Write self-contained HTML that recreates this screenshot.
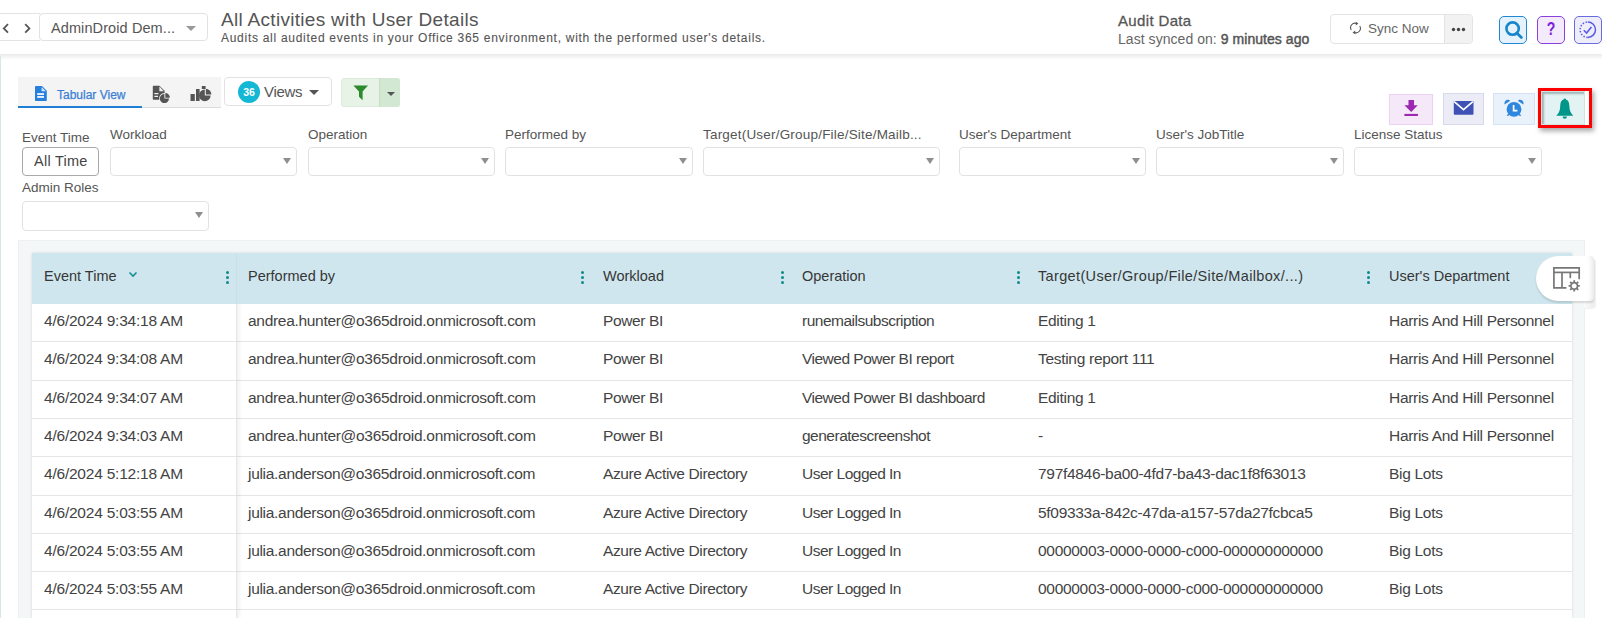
<!DOCTYPE html>
<html><head><meta charset="utf-8">
<style>
*{box-sizing:border-box;margin:0;padding:0}
html,body{width:1602px;height:618px;overflow:hidden;background:#fff;font-family:"Liberation Sans",sans-serif;color:#333}
.a{position:absolute}
.hdrshadow{left:0;top:54px;width:1602px;height:6px;background:linear-gradient(#ebebeb,#fff)}
.lstrip{left:0;top:56px;width:1.3px;height:562px;background:#dbe4ea}
.nav{left:-12px;top:13px;width:52px;height:28px;border:1px solid #e3e3e3;border-right:none}
.dd{border:1px solid #e2e2e2;border-radius:4px;background:#fff}
.tri{width:0;height:0;border-left:4px solid transparent;border-right:4px solid transparent;border-top:6px solid #8f8f8f}
.lbl{font-size:13.5px;color:#555}
.th{font-size:14.5px;color:#363636;top:267.5px}
.kb{width:3px;top:271px}
.kb i{display:block;width:3px;height:3px;border-radius:50%;background:#0f8a8a;margin-bottom:2px}
.row{left:32px;width:1540px;background:#fff;border-bottom:1px solid #e6e6e6}
.td{font-size:15.5px;color:#434343;top:8px;letter-spacing:-0.3px}
</style></head>
<body>
<!-- header -->
<div class="a hdrshadow"></div>
<div class="a lstrip"></div>
<div class="a nav"></div>
<svg class="a" style="left:0;top:20px" width="40" height="16" viewBox="0 0 40 16">
<path d="M8 4.2 L3.8 8.4 L8 12.6" fill="none" stroke="#555" stroke-width="1.8"/>
<path d="M25.2 4.2 L29.4 8.4 L25.2 12.6" fill="none" stroke="#555" stroke-width="1.8"/>
</svg>
<div class="a dd" style="left:39px;top:13px;width:169px;height:28px"></div>
<div class="a" style="left:51px;top:20px;font-size:14.5px;color:#555;letter-spacing:0.1px">AdminDroid Dem...</div>
<div class="a tri" style="left:186px;top:26px;border-left-width:5px;border-right-width:5px;border-top-width:5px;border-top-color:#999"></div>

<div class="a" style="left:221px;top:9px;font-size:19px;color:#555;letter-spacing:0.3px">All Activities with User Details</div>
<div class="a" style="left:221px;top:31px;font-size:12px;color:#555;letter-spacing:0.715px;-webkit-text-stroke:0.1px #555">Audits all audited events in your Office 365 environment, with the performed user's details.</div>

<div class="a" style="left:1118px;top:12px;font-size:15px;color:#555;letter-spacing:0.35px;-webkit-text-stroke:0.3px #555">Audit Data</div>
<div class="a" style="left:1118px;top:30.5px;font-size:14px;color:#666;letter-spacing:0.05px">Last synced on: <span style="color:#555;-webkit-text-stroke:0.45px #555">9 minutes ago</span></div>

<div class="a dd" style="left:1330px;top:14px;width:143px;height:30px;border-color:#e4e4e4"></div>
<div class="a" style="left:1444px;top:15px;width:28px;height:28px;background:#f2f2f2;border-left:1px solid #e4e4e4;border-radius:0 4px 4px 0"></div>
<div class="a" style="left:1368px;top:20.5px;font-size:13.5px;color:#666;letter-spacing:0px">Sync Now</div>
<svg class="a" style="left:1349px;top:21px" width="13" height="14" viewBox="0 0 13 14"><path d="M2.3 9 A4.4 4.4 0 0 1 7.8 2.6" fill="none" stroke="#555" stroke-width="1.1"/><path d="M10.7 5 A4.4 4.4 0 0 1 5.2 11.4" fill="none" stroke="#555" stroke-width="1.1"/><path d="M6.8 0.8 L9.4 2.6 L6.8 4.4Z" fill="#555"/><path d="M6.2 9.6 L3.6 11.4 L6.2 13.2Z" fill="#555"/></svg>
<svg class="a" style="left:1451px;top:27px" width="15" height="5" viewBox="0 0 15 5"><circle cx="2.5" cy="2.5" r="1.7" fill="#444"/><circle cx="7.5" cy="2.5" r="1.7" fill="#444"/><circle cx="12.5" cy="2.5" r="1.7" fill="#444"/></svg>

<div class="a" style="left:1499px;top:16px;width:28px;height:27.5px;border:1.5px solid #1e88d2;border-radius:5px;background:#e6f2fb"></div>
<div class="a" style="left:1537px;top:16px;width:28px;height:27.5px;border:1.5px solid #8a3fdc;border-radius:5px;background:#f3ebfb"></div>
<div class="a" style="left:1574px;top:16px;width:28px;height:27.5px;border:1.5px solid #6b6be0;border-radius:5px;background:#eeeefb"></div>
<svg class="a" style="left:1499px;top:16px" width="28" height="28" viewBox="0 0 28 28"><circle cx="13.6" cy="12.6" r="6.2" fill="none" stroke="#1586cc" stroke-width="2.6"/><path d="M17.8 17 L22.4 21.4" stroke="#1586cc" stroke-width="2.8" stroke-linecap="round"/></svg>
<div class="a" style="left:1537px;top:17px;width:28px;text-align:center;font-size:17.5px;font-weight:bold;color:#7b22d8;line-height:24px;transform:scaleX(0.8)">?</div>
<svg class="a" style="left:1574px;top:16px" width="28" height="28" viewBox="0 0 28 28"><path d="M13.8 6 A7.7 7.7 0 1 1 13.8 21.4" fill="none" stroke="#5b5be6" stroke-width="1.5"/><path d="M13.8 21.4 A7.7 7.7 0 0 1 13.8 6" fill="none" stroke="#5b5be6" stroke-width="1.5" stroke-dasharray="1.5 1.6"/><path d="M9.8 14.2 L12.6 17 L17.4 11" fill="none" stroke="#5b5be6" stroke-width="1.6"/></svg>

<!-- toolbar -->
<div class="a" style="left:18px;top:77px;width:203px;height:31px;background:#f4f4f4;border-bottom:1.5px solid #dcdcdc"></div>
<div class="a" style="left:18px;top:106px;width:124px;height:2px;background:#1f7fd8"></div>
<div class="a" style="left:57px;top:88px;font-size:12px;color:#3a7fd5;letter-spacing:0px;-webkit-text-stroke:0.25px #3a7fd5">Tabular View</div>
<svg class="a" style="left:35px;top:86px" width="12" height="15" viewBox="0 0 12 15"><path d="M0.8 0 H7 L11.8 4.8 V14.2 Q11.8 15 11 15 H0.8 Q0 15 0 14.2 V0.8 Q0 0 0.8 0Z" fill="#2680db"/><path d="M6.6 1 V5.2 H10.8Z" fill="#d6e8f8"/><rect x="2.2" y="7.2" width="6.8" height="1.7" fill="#fff"/><rect x="2.2" y="10.1" width="6.8" height="1.7" fill="#fff"/></svg>
<svg class="a" style="left:152px;top:85px" width="20" height="18" viewBox="0 0 20 18"><path d="M1.6 0.7 H7.4 L12.6 5.8 V8 A5.6 5.6 0 0 0 7.2 14.8 H1.6 Q0.8 14.8 0.8 14 V1.5 Q0.8 0.7 1.6 0.7Z" fill="#555"/><path d="M7.4 1.6 V6.2 H11.8Z" fill="#f4f4f4"/><rect x="2.4" y="8" width="4" height="1.2" fill="#f4f4f4"/><rect x="2.4" y="10.8" width="3.6" height="1.2" fill="#f4f4f4"/><path d="M12.4 9 A4.6 4.6 0 1 0 17 13.6 H12.4Z" fill="#555"/><path d="M13.3 8.1 A4.6 4.6 0 0 1 17.9 12.7 H13.3Z" fill="#555"/></svg>
<svg class="a" style="left:189px;top:85px" width="24" height="17" viewBox="0 0 24 17"><rect x="1.5" y="9" width="4.3" height="7" fill="#555"/><rect x="7" y="4" width="3.6" height="12" fill="#555"/><rect x="12.8" y="1" width="3.8" height="3" fill="#555"/><path d="M15.8 4.6 A5.8 5.8 0 1 0 21.6 10.4 H15.8Z" fill="#555"/><path d="M16.8 3.8 A5.8 5.8 0 0 1 22.4 9.4 H16.8Z" fill="#555"/></svg>

<div class="a dd" style="left:224px;top:77px;width:108px;height:29px;border-color:#e2e2e2"></div>
<div class="a" style="left:238px;top:81px;width:22px;height:22px;border-radius:50%;background:#14b8d4;color:#fff;font-size:10.5px;font-weight:bold;text-align:center;line-height:23px;letter-spacing:-0.2px">36</div>
<div class="a" style="left:264px;top:83px;font-size:15px;color:#555;letter-spacing:-0.3px">Views</div>
<div class="a tri" style="left:309px;top:90px;border-left-width:5px;border-right-width:5px;border-top-width:5px;border-top-color:#555"></div>

<div class="a" style="left:341px;top:78px;width:59px;height:29px;background:#e8f3e8;border:1px solid #dcebdc;border-radius:3px"></div>
<div class="a" style="left:379px;top:78px;width:21px;height:29px;background:#d3e8d3;border-radius:0 3px 3px 0;border-left:1px solid #c5dcc5"></div>
<svg class="a" style="left:353px;top:85px" width="16" height="16" viewBox="0 0 16 16"><path d="M0.4 0.4 H15 L9.6 6.6 V15.2 L6 11.8 V6.6Z" fill="#2b8a2b"/></svg>
<div class="a tri" style="left:387px;top:92px;border-left-width:4px;border-right-width:4px;border-top-width:4px;border-top-color:#555"></div>

<!-- action buttons -->
<div class="a" style="left:1389px;top:94px;width:44px;height:31px;background:#f5e8f8;border:1px solid #ecd2f1"></div>
<svg class="a" style="left:1404px;top:99px" width="15" height="18" viewBox="0 0 15 18"><path d="M4.5 1 H10 V6.2 H13.7 L7.25 12.9 L0.4 6.2 H4.5Z" fill="#9c27b0"/><rect x="0.4" y="14.9" width="13.5" height="2.1" fill="#9c27b0"/></svg>
<div class="a" style="left:1443px;top:93px;width:41px;height:32px;background:#ececf6;border:1px solid #d9d9ee"></div>
<svg class="a" style="left:1453px;top:100px" width="22" height="16" viewBox="0 0 22 16"><rect x="0.8" y="1" width="19.7" height="13.7" rx="0.8" fill="#3f51b5"/><path d="M1.2 1.6 L10.5 9.6 L19.9 1.6" fill="none" stroke="#fff" stroke-width="1.6"/></svg>
<div class="a" style="left:1493px;top:93px;width:42px;height:32px;background:#e9f1fb;border:1px solid #d3e2f5"></div>
<svg class="a" style="left:1504px;top:99px" width="20" height="19" viewBox="0 0 20 19"><circle cx="10" cy="10.3" r="7.4" fill="#2e86de"/><path d="M0.6 5.4 C-0.2 2.2 2.6 0 5.6 1.2 L6 2Z" fill="#2e86de"/><path d="M19.4 5.4 C20.2 2.2 17.4 0 14.4 1.2 L14 2Z" fill="#2e86de"/><path d="M3.4 16.8 L5.2 15" stroke="#2e86de" stroke-width="1.6"/><path d="M16.6 16.8 L14.8 15" stroke="#2e86de" stroke-width="1.6"/><path d="M9.6 6 V11.6 H13.4" fill="none" stroke="#fff" stroke-width="1.7"/></svg>
<div class="a" style="left:1538px;top:88px;width:54px;height:40px;box-shadow:2px 3px 5px rgba(0,0,0,0.35)"></div>
<div class="a" style="left:1541px;top:91px;width:48px;height:34px;background:#fff"></div>
<div class="a" style="left:1541px;top:91px;width:44px;height:34px;background:#e3f2f2;border:1px solid #cfe3e1;box-shadow:inset 2px 2px 2px rgba(80,110,110,0.45)"></div>
<div class="a" style="left:1538px;top:88px;width:54px;height:40px;border:3px solid #f00"></div>
<svg class="a" style="left:1555px;top:98px" width="20" height="22" viewBox="0 0 20 22"><circle cx="9.8" cy="1.6" r="1.2" fill="#00968a"/><path d="M9.8 1.4 C6 1.4 5.4 4.6 5.2 8.4 C5 12 4.4 14.6 1.3 17.8 H18.3 C15.2 14.6 14.6 12 14.4 8.4 C14.2 4.6 13.6 1.4 9.8 1.4Z" fill="#00968a"/><path d="M7.6 18.6 A2.2 2.2 0 0 0 12 18.6Z" fill="#00968a"/></svg>

<!-- filters -->
<div id="filters"><div class="a lbl" style="left:22px;top:130px">Event Time</div><div class="a" style="left:22px;top:147px;width:77px;height:29px;border:1px solid #a9a9a9;border-radius:4px"></div><div class="a" style="left:34px;top:153px;font-size:14.5px;color:#444;letter-spacing:0.25px">All Time</div><div class="a dd" style="left:110px;top:147px;width:187px;height:29px"></div><div class="a tri" style="left:283px;top:158px"></div><div class="a lbl" style="left:110px;top:126.5px;">Workload</div><div class="a dd" style="left:308px;top:147px;width:187px;height:29px"></div><div class="a tri" style="left:481px;top:158px"></div><div class="a lbl" style="left:308px;top:126.5px;">Operation</div><div class="a dd" style="left:505px;top:147px;width:188px;height:29px"></div><div class="a tri" style="left:679px;top:158px"></div><div class="a lbl" style="left:505px;top:126.5px;">Performed by</div><div class="a dd" style="left:703px;top:147px;width:237px;height:29px"></div><div class="a tri" style="left:926px;top:158px"></div><div class="a lbl" style="left:703px;top:126.5px;letter-spacing:0.2px;">Target(User/Group/File/Site/Mailb...</div><div class="a dd" style="left:959px;top:147px;width:187px;height:29px"></div><div class="a tri" style="left:1132px;top:158px"></div><div class="a lbl" style="left:959px;top:126.5px;">User's Department</div><div class="a dd" style="left:1156px;top:147px;width:188px;height:29px"></div><div class="a tri" style="left:1330px;top:158px"></div><div class="a lbl" style="left:1156px;top:126.5px;">User's JobTitle</div><div class="a dd" style="left:1354px;top:147px;width:188px;height:29px"></div><div class="a tri" style="left:1528px;top:158px"></div><div class="a lbl" style="left:1354px;top:126.5px;">License Status</div><div class="a dd" style="left:22px;top:201px;width:187px;height:30px"></div><div class="a tri" style="left:195px;top:212px"></div><div class="a lbl" style="left:22px;top:180px;">Admin Roles</div></div>

<!-- table -->
<div class="a" style="left:18px;top:240px;width:1567px;height:378px;background:#f4f7f8;border-top:1px solid #eef1f2;border-left:1px solid #eef1f2;border-right:1px solid #eceff1"></div>
<div class="a" style="left:32px;top:253px;width:1540px;height:400px;box-shadow:0 0 3px rgba(0,0,0,0.12)"></div>
<div class="a" style="left:32px;top:253px;width:1540px;height:51px;background:#cfe6ee"></div>
<div id="table"><div class="a th" style="left:44px;">Event Time</div><div class="a th" style="left:248px;">Performed by</div><div class="a th" style="left:603px;">Workload</div><div class="a th" style="left:802px;">Operation</div><div class="a th" style="left:1038px;letter-spacing:0.35px;">Target(User/Group/File/Site/Mailbox/...)</div><div class="a th" style="left:1389px;">User's Department</div><div class="a kb" style="left:225.5px"><i></i><i></i><i></i></div><div class="a kb" style="left:581px"><i></i><i></i><i></i></div><div class="a kb" style="left:781px"><i></i><i></i><i></i></div><div class="a kb" style="left:1017px"><i></i><i></i><i></i></div><div class="a kb" style="left:1367px"><i></i><i></i><i></i></div><div class="a row" style="top:304px;height:38px"><div class="a td" style="left:12px;letter-spacing:-0.22px">4/6/2024 9:34:18 AM</div><div class="a td" style="left:216px;letter-spacing:-0.3px">andrea.hunter@o365droid.onmicrosoft.com</div><div class="a td" style="left:571px;letter-spacing:-0.38px">Power BI</div><div class="a td" style="left:770px;letter-spacing:-0.5px">runemailsubscription</div><div class="a td" style="left:1006px;letter-spacing:-0.3px">Editing 1</div><div class="a td" style="left:1357px;letter-spacing:-0.3px">Harris And Hill Personnel</div></div><div class="a row" style="top:342px;height:39px"><div class="a td" style="left:12px;letter-spacing:-0.22px">4/6/2024 9:34:08 AM</div><div class="a td" style="left:216px;letter-spacing:-0.3px">andrea.hunter@o365droid.onmicrosoft.com</div><div class="a td" style="left:571px;letter-spacing:-0.38px">Power BI</div><div class="a td" style="left:770px;letter-spacing:-0.5px">Viewed Power BI report</div><div class="a td" style="left:1006px;letter-spacing:-0.3px">Testing report 111</div><div class="a td" style="left:1357px;letter-spacing:-0.3px">Harris And Hill Personnel</div></div><div class="a row" style="top:381px;height:38px"><div class="a td" style="left:12px;letter-spacing:-0.22px">4/6/2024 9:34:07 AM</div><div class="a td" style="left:216px;letter-spacing:-0.3px">andrea.hunter@o365droid.onmicrosoft.com</div><div class="a td" style="left:571px;letter-spacing:-0.38px">Power BI</div><div class="a td" style="left:770px;letter-spacing:-0.5px">Viewed Power BI dashboard</div><div class="a td" style="left:1006px;letter-spacing:-0.3px">Editing 1</div><div class="a td" style="left:1357px;letter-spacing:-0.3px">Harris And Hill Personnel</div></div><div class="a row" style="top:419px;height:38px"><div class="a td" style="left:12px;letter-spacing:-0.22px">4/6/2024 9:34:03 AM</div><div class="a td" style="left:216px;letter-spacing:-0.3px">andrea.hunter@o365droid.onmicrosoft.com</div><div class="a td" style="left:571px;letter-spacing:-0.38px">Power BI</div><div class="a td" style="left:770px;letter-spacing:-0.5px">generatescreenshot</div><div class="a td" style="left:1006px;letter-spacing:-0.3px">-</div><div class="a td" style="left:1357px;letter-spacing:-0.3px">Harris And Hill Personnel</div></div><div class="a row" style="top:457px;height:39px"><div class="a td" style="left:12px;letter-spacing:-0.22px">4/6/2024 5:12:18 AM</div><div class="a td" style="left:216px;letter-spacing:-0.3px">julia.anderson@o365droid.onmicrosoft.com</div><div class="a td" style="left:571px;letter-spacing:-0.38px">Azure Active Directory</div><div class="a td" style="left:770px;letter-spacing:-0.5px">User Logged In</div><div class="a td" style="left:1006px;letter-spacing:-0.3px">797f4846-ba00-4fd7-ba43-dac1f8f63013</div><div class="a td" style="left:1357px;letter-spacing:-0.3px">Big Lots</div></div><div class="a row" style="top:496px;height:38px"><div class="a td" style="left:12px;letter-spacing:-0.22px">4/6/2024 5:03:55 AM</div><div class="a td" style="left:216px;letter-spacing:-0.3px">julia.anderson@o365droid.onmicrosoft.com</div><div class="a td" style="left:571px;letter-spacing:-0.38px">Azure Active Directory</div><div class="a td" style="left:770px;letter-spacing:-0.5px">User Logged In</div><div class="a td" style="left:1006px;letter-spacing:-0.3px">5f09333a-842c-47da-a157-57da27fcbca5</div><div class="a td" style="left:1357px;letter-spacing:-0.3px">Big Lots</div></div><div class="a row" style="top:534px;height:38px"><div class="a td" style="left:12px;letter-spacing:-0.22px">4/6/2024 5:03:55 AM</div><div class="a td" style="left:216px;letter-spacing:-0.3px">julia.anderson@o365droid.onmicrosoft.com</div><div class="a td" style="left:571px;letter-spacing:-0.38px">Azure Active Directory</div><div class="a td" style="left:770px;letter-spacing:-0.5px">User Logged In</div><div class="a td" style="left:1006px;letter-spacing:-0.3px">00000003-0000-0000-c000-000000000000</div><div class="a td" style="left:1357px;letter-spacing:-0.3px">Big Lots</div></div><div class="a row" style="top:572px;height:38px"><div class="a td" style="left:12px;letter-spacing:-0.22px">4/6/2024 5:03:55 AM</div><div class="a td" style="left:216px;letter-spacing:-0.3px">julia.anderson@o365droid.onmicrosoft.com</div><div class="a td" style="left:571px;letter-spacing:-0.38px">Azure Active Directory</div><div class="a td" style="left:770px;letter-spacing:-0.5px">User Logged In</div><div class="a td" style="left:1006px;letter-spacing:-0.3px">00000003-0000-0000-c000-000000000000</div><div class="a td" style="left:1357px;letter-spacing:-0.3px">Big Lots</div></div><div class="a row" style="top:610px;height:39px"><div class="a td" style="left:12px;letter-spacing:-0.22px"></div><div class="a td" style="left:216px;letter-spacing:-0.3px"></div><div class="a td" style="left:571px;letter-spacing:-0.38px"></div><div class="a td" style="left:770px;letter-spacing:-0.5px"></div><div class="a td" style="left:1006px;letter-spacing:-0.3px"></div><div class="a td" style="left:1357px;letter-spacing:-0.3px"></div></div><div class="a" style="left:236px;top:253px;width:1px;height:51px;background:#c9dee6"></div><div class="a" style="left:236px;top:304px;width:1px;height:314px;background:#e6e6e6"></div><div class="a" style="left:237px;top:304px;width:5px;height:314px;background:linear-gradient(90deg,rgba(0,0,0,0.05),rgba(0,0,0,0))"></div><svg class="a" style="left:128px;top:271px" width="10" height="7" viewBox="0 0 10 7"><path d="M1.5 1.5 L5 5 L8.5 1.5" fill="none" stroke="#129090" stroke-width="1.6"/></svg><div class="a" style="left:1584px;top:258px;width:11px;height:50px;background:linear-gradient(90deg,#fafafa,#ececec);border-radius:0 4px 4px 0;box-shadow:1px 1px 1px rgba(0,0,0,0.06)"></div><div class="a" style="left:1536px;top:256px;width:58px;height:45px;background:#fff;border-radius:22.5px 4px 4px 22.5px;box-shadow:0 2px 2px rgba(0,0,0,0.13), inset -7px 0 5px -5px rgba(0,0,0,0.10)"></div><svg class="a" style="left:1550px;top:264px" width="34" height="30" viewBox="0 0 34 30"><path d="M16.4 23.8 H3.9 V3.8 H29.2 V15.2" fill="none" stroke="#777" stroke-width="1.7"/><path d="M3.9 8.4 H29.2" stroke="#777" stroke-width="1.7"/><path d="M12 8.4 V23.8" stroke="#777" stroke-width="1.7"/><path d="M20.3 8.4 V14.2" stroke="#777" stroke-width="1.7"/><g transform="translate(24.2 21.9)"><circle r="3.3" fill="none" stroke="#777" stroke-width="1.7"/><g stroke="#777" stroke-width="1.8"><path d="M0 -5.6 V-3.6 M0 3.6 V5.6 M-5.6 0 H-3.6 M3.6 0 H5.6 M-4 -4 L-2.6 -2.6 M2.6 2.6 L4 4 M-4 4 L-2.6 2.6 M2.6 -2.6 L4 -4"/></g></g></svg></div>
</body></html>
